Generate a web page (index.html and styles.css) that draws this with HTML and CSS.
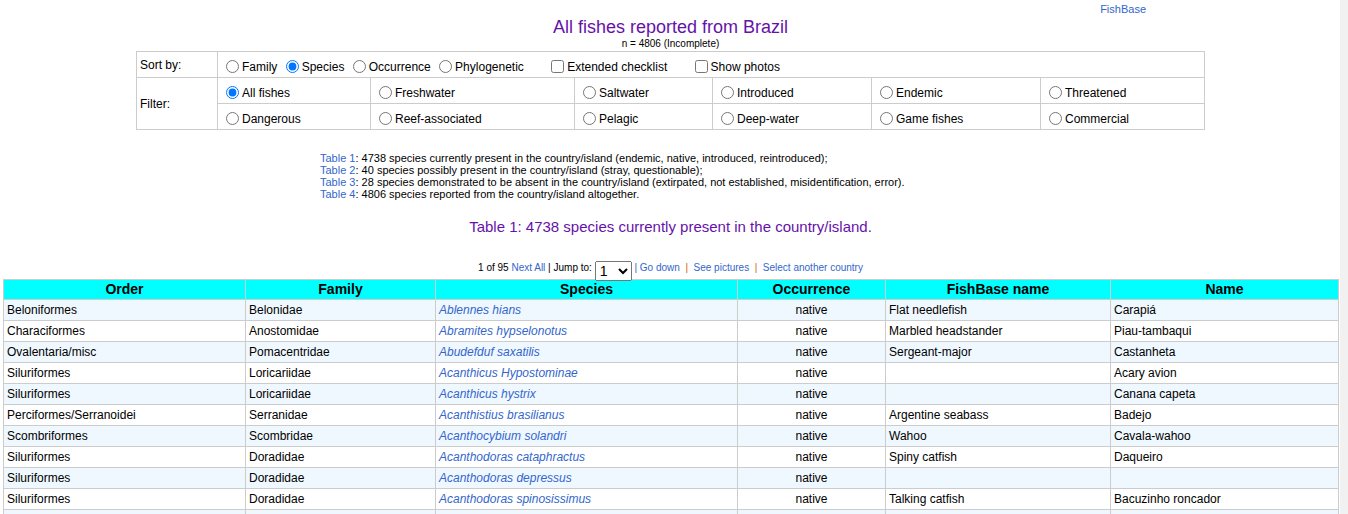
FILE: index.html
```html
<!DOCTYPE html>
<html lang="en">
<head>
<meta charset="utf-8">
<title>All fishes reported from Brazil</title>
<link rel="stylesheet" href="styles.css">
</head>
<body>
<div class="topbar"><a href="#" class="fb-link">FishBase</a></div>
<h1 class="title">All fishes reported from Brazil</h1>
<div class="count">n = 4806 (Incomplete)</div>

<table class="options">
  <colgroup>
    <col class="c-lab"><col class="c1"><col class="c2"><col class="c3"><col class="c4"><col class="c5"><col class="c6">
  </colgroup>
  <tr>
    <td class="lab">Sort by:</td>
    <td colspan="6">
      <label><input type="radio" name="sort">Family</label>
      <label><input type="radio" name="sort" checked>Species</label>
      <label><input type="radio" name="sort">Occurrence</label>
      <label><input type="radio" name="sort">Phylogenetic</label>
      <label class="gap"><input type="checkbox">Extended checklist</label>
      <label class="gap"><input type="checkbox">Show photos</label>
    </td>
  </tr>
  <tr>
    <td class="lab" rowspan="2">Filter:</td>
    <td><label><input type="radio" name="filter" checked>All fishes</label></td>
    <td><label><input type="radio" name="filter">Freshwater</label></td>
    <td><label><input type="radio" name="filter">Saltwater</label></td>
    <td><label><input type="radio" name="filter">Introduced</label></td>
    <td><label><input type="radio" name="filter">Endemic</label></td>
    <td><label><input type="radio" name="filter">Threatened</label></td>
  </tr>
  <tr>
    <td><label><input type="radio" name="filter">Dangerous</label></td>
    <td><label><input type="radio" name="filter">Reef-associated</label></td>
    <td><label><input type="radio" name="filter">Pelagic</label></td>
    <td><label><input type="radio" name="filter">Deep-water</label></td>
    <td><label><input type="radio" name="filter">Game fishes</label></td>
    <td><label><input type="radio" name="filter">Commercial</label></td>
  </tr>
</table>

<div class="tables-list">
  <div><a href="#">Table 1</a>: 4738 species currently present in the country/island (endemic, native, introduced, reintroduced);</div>
  <div><a href="#">Table 2</a>: 40 species possibly present in the country/island (stray, questionable);</div>
  <div><a href="#">Table 3</a>: 28 species demonstrated to be absent in the country/island (extirpated, not established, misidentification, error).</div>
  <div><a href="#">Table 4</a>: 4806 species reported from the country/island altogether.</div>
</div>

<h2 class="subtitle">Table 1: 4738 species currently present in the country/island.</h2>

<div class="pager">1 of 95 <a href="#">Next All</a> | Jump to: <select class="jump"><option>1</option><option>2</option><option>3</option></select> <a href="#">| Go down</a> <span class="sep">&nbsp;|&nbsp;</span> <a href="#">See pictures</a> <span class="sep">&nbsp;|&nbsp;</span> <a href="#">Select another country</a></div>

<table class="fish">
  <colgroup>
    <col class="w-order"><col class="w-family"><col class="w-species"><col class="w-occ"><col class="w-fb"><col class="w-name">
  </colgroup>
  <thead>
    <tr><th>Order</th><th>Family</th><th>Species</th><th>Occurrence</th><th>FishBase name</th><th>Name</th></tr>
  </thead>
  <tbody>
    <tr><td>Beloniformes</td><td>Belonidae</td><td><a href="#" class="sp">Ablennes hians</a></td><td class="occ">native</td><td>Flat needlefish</td><td>Carapiá</td></tr>
    <tr><td>Characiformes</td><td>Anostomidae</td><td><a href="#" class="sp">Abramites hypselonotus</a></td><td class="occ">native</td><td>Marbled headstander</td><td>Piau-tambaqui</td></tr>
    <tr><td>Ovalentaria/misc</td><td>Pomacentridae</td><td><a href="#" class="sp">Abudefduf saxatilis</a></td><td class="occ">native</td><td>Sergeant-major</td><td>Castanheta</td></tr>
    <tr><td>Siluriformes</td><td>Loricariidae</td><td><a href="#" class="sp">Acanthicus Hypostominae</a></td><td class="occ">native</td><td></td><td>Acary avion</td></tr>
    <tr><td>Siluriformes</td><td>Loricariidae</td><td><a href="#" class="sp">Acanthicus hystrix</a></td><td class="occ">native</td><td></td><td>Canana capeta</td></tr>
    <tr><td>Perciformes/Serranoidei</td><td>Serranidae</td><td><a href="#" class="sp">Acanthistius brasilianus</a></td><td class="occ">native</td><td>Argentine seabass</td><td>Badejo</td></tr>
    <tr><td>Scombriformes</td><td>Scombridae</td><td><a href="#" class="sp">Acanthocybium solandri</a></td><td class="occ">native</td><td>Wahoo</td><td>Cavala-wahoo</td></tr>
    <tr><td>Siluriformes</td><td>Doradidae</td><td><a href="#" class="sp">Acanthodoras cataphractus</a></td><td class="occ">native</td><td>Spiny catfish</td><td>Daqueiro</td></tr>
    <tr><td>Siluriformes</td><td>Doradidae</td><td><a href="#" class="sp">Acanthodoras depressus</a></td><td class="occ">native</td><td></td><td></td></tr>
    <tr><td>Siluriformes</td><td>Doradidae</td><td><a href="#" class="sp">Acanthodoras spinosissimus</a></td><td class="occ">native</td><td>Talking catfish</td><td>Bacuzinho roncador</td></tr>
    <tr><td>Tetraodontiformes</td><td>Ostraciidae</td><td><a href="#" class="sp">Acanthostracion polygonius</a></td><td class="occ">native</td><td>Honeycomb cowfish</td><td>Baiacu-cofre</td></tr>
    <tr><td>Tetraodontiformes</td><td>Ostraciidae</td><td><a href="#" class="sp">Acanthostracion quadricornis</a></td><td class="occ">native</td><td>Scrawled cowfish</td><td>Peixe-cofre</td></tr>
  </tbody>
</table>
</body>
</html>
```

FILE: styles.css
```css
html, body {
  margin: 0;
  padding: 0;
}
html {
  background: linear-gradient(to right, #ffffff calc(100% - 8px), #f1f1f1 calc(100% - 8px));
}
body {
  padding: 0 10px 20px 3px;
  font-family: "Liberation Sans", Arial, sans-serif;
  color: #000;
}
a {
  color: #3366cc;
  text-decoration: none;
}

.topbar {
  padding-top: 3px;
  padding-right: 192px;
  text-align: right;
  font-size: 11px;
  line-height: 13px;
  height: 14px;
}

.title {
  margin: 0;
  font-size: 18px;
  line-height: 21px;
  font-weight: normal;
  text-align: center;
  color: #6611aa;
}

.count {
  font-size: 10px;
  line-height: 12px;
  text-align: center;
}

.options {
  margin: 1px auto 0;
  width: 1068px;
  border-collapse: collapse;
  font-size: 12px;
  table-layout: fixed;
  background: #fff;
}
.options td {
  border: 1px solid #cccccc;
  padding: 7px 3px 1px;
  line-height: 17px;
  height: 17px;
  white-space: nowrap;
}
.options td.lab {
  vertical-align: middle;
  padding: 5px 3px 3px;
}
.options input {
  margin: 0 3px 0 5px;
  vertical-align: -2px;
}
.options input[type="checkbox"] {
  margin: 0 3px 0 4px;
}
.options .gap {
  margin-left: 20px;
}
.c-lab { width: 81px; }
.c1 { width: 153px; }
.c2 { width: 204px; }
.c3 { width: 138px; }
.c4 { width: 159px; }
.c5 { width: 169px; }
.c6 { width: 164px; }

.tables-list {
  margin: 22px 0 0 317px;
  font-size: 11px;
  line-height: 12px;
}

.subtitle {
  margin: 18px 0 0;
  font-size: 15px;
  line-height: 18px;
  font-weight: normal;
  text-align: center;
  color: #6611aa;
}

.pager {
  margin-top: 22px;
  font-size: 10px;
  line-height: 20px;
  height: 20px;
  text-align: center;
}
.pager .sep {
  color: #cc6600;
}
.jump {
  font-family: "Liberation Sans", Arial, sans-serif;
  font-size: 14px;
  height: 20px;
  width: 37px;
  padding: 0;
  vertical-align: -5px;
}

.fish {
  margin-top: 1px;
  width: 100%;
  border-collapse: collapse;
  table-layout: fixed;
  font-size: 12px;
  background: #fff;
}
.fish th {
  background: #00ffff;
  border: 1px solid #cccccc;
  font-size: 14px;
  font-weight: bold;
  line-height: 17px;
  padding: 1px 3px;
  text-align: center;
}
.fish td {
  border: 1px solid #cccccc;
  line-height: 14px;
  padding: 3px 3px;
  height: 14px;
  white-space: nowrap;
  overflow: hidden;
}
.fish tbody tr:nth-child(odd) {
  background: #f0f8ff;
}
.fish td.occ {
  text-align: center;
}
.fish .sp {
  font-style: italic;
}
.w-order { width: 242px; }
.w-family { width: 190px; }
.w-species { width: 302px; }
.w-occ { width: 148px; }
.w-fb { width: 225px; }
.w-name { width: 228px; }
```
